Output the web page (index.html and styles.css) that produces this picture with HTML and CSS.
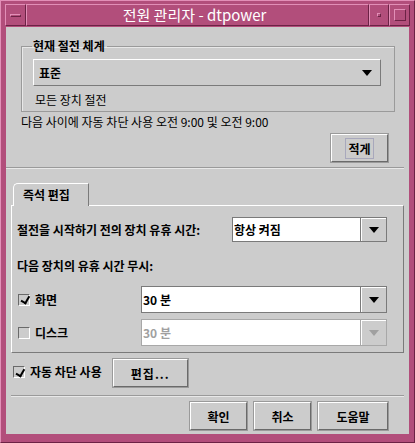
FILE: index.html
```html
<!DOCTYPE html>
<html>
<head>
  <meta charset="utf-8">
  <link rel="stylesheet" href="styles.css">
</head>
<body>
  <div class="window">
    <div class="titlebar">
      <div class="tb-button menu-button"><span class="menu-bar"></span></div>
      <div class="tb-title">전원 관리자 - dtpower</div>
      <div class="tb-button min-button"><span class="min-dot"></span></div>
      <div class="tb-button max-button"><span class="max-box"></span></div>
    </div>

    <div class="content">
      <fieldset class="group">
        <legend class="group-title">현재 절전 체계</legend>
        <div class="combo combo-raised">
          <span class="combo-text bold">표준</span>
          <span class="arrow"></span>
        </div>
        <div class="group-note">모든 장치 절전</div>
      </fieldset>

      <div class="schedule">다음 사이에 자동 차단 사용 오전 9:00 및 오전 9:00</div>

      <div class="less-row">
        <button class="button less-button"><span class="focus">적게</span></button>
      </div>

      <div class="separator"></div>

      <div class="tabs">
        <div class="tab">즉석 편집</div>
      </div>
      <div class="tab-panel">
        <div class="idle-row">
          <span class="label bold">절전을 시작하기 전의 장치 유휴 시간:</span>
          <div class="combo combo-field idle-combo">
            <span class="field-text bold">항상 켜짐</span>
            <span class="arrow-button"><span class="arrow"></span></span>
          </div>
        </div>

        <div class="label bold ignore-title">다음 장치의 유휴 시간 무시:</div>

        <div class="device-row">
          <label class="check bold"><span class="box checked"></span>화면</label>
          <div class="combo combo-field device-combo">
            <span class="field-text bold">30 분</span>
            <span class="arrow-button"><span class="arrow"></span></span>
          </div>
        </div>

        <div class="device-row">
          <label class="check bold"><span class="box"></span>디스크</label>
          <div class="combo combo-field device-combo disabled">
            <span class="field-text bold">30 분</span>
            <span class="arrow-button"><span class="arrow"></span></span>
          </div>
        </div>
      </div>

      <div class="auto-row">
        <label class="check bold"><span class="box checked"></span>자동 차단 사용</label>
        <button class="button edit-button">편집...</button>
      </div>

      <div class="separator bottom-sep"></div>

      <div class="actions">
        <button class="button action-button">확인</button>
        <button class="button action-button">취소</button>
        <button class="button action-button help-button">도움말</button>
      </div>
    </div>
  </div>
</body>
</html>
```

FILE: styles.css
```css
body {
  margin: 0;
  background: #cccccc;
  font-family: "Noto Sans CJK KR", "DejaVu Sans", sans-serif;
  font-size: 12px;
  line-height: 16px;
  color: #000;
}

.bold {
  font-weight: bold;
}

.window {
  width: 415px;
  height: 443px;
  box-sizing: border-box;
  padding: 4px 5px 8px 5px;
  background: #b24e7b;
  border-top: 1px solid #e28fb7;
  border-left: 1px solid #e28fb7;
  border-right: 1px solid #6c2245;
  border-bottom: 1px solid #6c2245;
  display: flex;
  flex-direction: column;
  overflow: hidden;
}

/* title bar */
.titlebar {
  height: 22px;
  display: flex;
  margin: -1px -1px 0 -1px;
}

.tb-button {
  box-sizing: border-box;
  height: 22px;
  display: flex;
  align-items: center;
  justify-content: center;
  border-top: 1px solid #e28fb7;
  border-left: 1px solid #e28fb7;
  border-right: 1px solid #6c2245;
  border-bottom: 1px solid #6c2245;
}

.menu-button {
  width: 21px;
}

.menu-bar {
  width: 11px;
  height: 3px;
  box-sizing: border-box;
  border-top: 1px solid #e28fb7;
  border-left: 1px solid #e28fb7;
  border-right: 1px solid #6c2245;
  border-bottom: 1px solid #6c2245;
}

.tb-title {
  flex: 1;
  box-sizing: border-box;
  height: 22px;
  line-height: 20px;
  text-align: center;
  color: #fff;
  font-size: 15px;
  border-top: 1px solid #e28fb7;
  border-left: 1px solid #e28fb7;
  border-right: 1px solid #6c2245;
  border-bottom: 1px solid #6c2245;
  padding-right: 6px;
}

.min-button {
  width: 20px;
}

.min-dot {
  width: 4px;
  height: 4px;
  box-sizing: border-box;
  border-top: 1px solid #e28fb7;
  border-left: 1px solid #e28fb7;
  border-right: 1px solid #6c2245;
  border-bottom: 1px solid #6c2245;
}

.max-button {
  width: 21px;
}

.max-box {
  width: 12px;
  height: 12px;
  box-sizing: border-box;
  border-top: 1px solid #e28fb7;
  border-left: 1px solid #e28fb7;
  border-right: 1px solid #6c2245;
  border-bottom: 1px solid #6c2245;
}

/* content area */
.content {
  flex: 1;
  margin-top: 1px;
  background: #cccccc;
  display: flex;
  flex-direction: column;
  overflow: hidden;
}

.group {
  margin: 11px 14px 0 15px;
  padding: 5px 13px 3px 11px;
  border: 1px solid #9a9a9a;
  box-shadow: inset 1px 1px 0 #e8e8e8;
}

.group-title {
  font-weight: bold;
  padding: 0 2px 0 1px;
  margin-left: -1px;
}

.combo {
  display: flex;
  align-items: center;
  box-sizing: border-box;
  height: 27px;
}

.combo-raised {
  border-top: 1px solid #fff;
  border-left: 1px solid #fff;
  border-right: 1px solid #7a7a7a;
  border-bottom: 1px solid #7a7a7a;
  padding: 0 8px 0 5px;
  justify-content: space-between;
}

.arrow {
  width: 0;
  height: 0;
  border-left: 5px solid transparent;
  border-right: 5px solid transparent;
  border-top: 6px solid #000;
}

.group-note {
  padding: 6px 0 0 2px;
}

.schedule {
  margin: 2px 0 0 15px;
}

.less-row {
  display: flex;
  justify-content: flex-end;
  padding: 4px 21px 0 0;
}

.button {
  font-family: inherit;
  font-size: 12px;
  font-weight: bold;
  color: #000;
  background: #cccccc;
  box-sizing: border-box;
  height: 28px;
  padding: 0;
  border-top: 1px solid #fff;
  border-left: 1px solid #fff;
  border-right: 1px solid #6a6a6a;
  border-bottom: 1px solid #6a6a6a;
  box-shadow: 0 0 0 1px #9a9a9a;
}

.less-button {
  width: 57px;
}

.focus {
  display: inline-block;
  padding: 1px 2px;
  border: 1px solid #a8a8bc;
}

.separator {
  height: 1px;
  background: #9a9a9a;
  border-bottom: 1px solid #e8e8e8;
  margin: 5px 5px 0 0;
}

/* tabs */
.tabs {
  display: flex;
  padding: 14px 0 0 7px;
}

.tab {
  box-sizing: border-box;
  width: 76px;
  height: 23px;
  line-height: 21px;
  padding-left: 9px;
  font-weight: bold;
  border-top: 1px solid #fff;
  border-left: 1px solid #fff;
  border-right: 1px solid #7a7a7a;
  border-top-left-radius: 5px;
  margin-bottom: -1px;
  background: #cccccc;
  position: relative;
}

.tab-panel {
  margin: 0 5px 0 5px;
  height: 148px;
  box-sizing: border-box;
  border-top: 1px solid #fff;
  border-left: 1px solid #fff;
  border-right: 1px solid #7a7a7a;
  border-bottom: 1px solid #7a7a7a;
  padding: 11px 0 0 5px;
}

.idle-row {
  display: flex;
  align-items: center;
}

.idle-row .label {
  width: 215px;
}

.combo-field {
  border: 1px solid #7a7a7a;
  background: #fff;
  height: 25px;
}

.field-text {
  flex: 1;
  padding-left: 1px;
}

.arrow-button {
  align-self: stretch;
  width: 25px;
  display: flex;
  align-items: center;
  justify-content: center;
  background: #cccccc;
  border-left: 1px solid #7a7a7a;
  box-shadow: inset 1px 1px 0 #fff;
}

.idle-combo {
  width: 155px;
}

.ignore-title {
  margin-top: 16px;
}

.device-row {
  display: flex;
  align-items: center;
  margin-top: 12px;
}

.device-row + .device-row {
  margin-top: 6px;
}

.check {
  display: flex;
  align-items: center;
  width: 124px;
}

.box {
  width: 12px;
  height: 12px;
  box-sizing: border-box;
  margin: 0 5px 0 1px;
  border-top: 1px solid #6a6a6a;
  border-left: 1px solid #6a6a6a;
  border-right: 1px solid #fff;
  border-bottom: 1px solid #fff;
  display: flex;
  align-items: center;
  justify-content: center;
}

.box.checked::after {
  content: "";
  width: 4px;
  height: 7px;
  border-right: 2px solid #000;
  border-bottom: 2px solid #000;
  transform: rotate(30deg) translate(1px, -1px);
}

.device-combo {
  width: 246px;
  height: 27px;
}

.disabled {
  color: #a0a0a0;
  border-color: #a8a8a8;
}

.disabled .arrow-button {
  border-left-color: #a8a8a8;
}

.disabled .arrow {
  border-top-color: #a0a0a0;
}

.auto-row {
  display: flex;
  align-items: center;
  padding: 6px 0 0 6px;
}

.auto-row .check {
  width: auto;
  margin-right: 11px;
  align-self: flex-start;
  margin-top: 5px;
}

.edit-button {
  width: 75px;
  letter-spacing: 1px;
}

.bottom-sep {
  margin: 8px 5px 0 5px;
}

.actions {
  display: flex;
  justify-content: flex-end;
  gap: 7px;
  padding: 5px 21px 0 0;
}

.action-button {
  width: 57px;
}

.help-button {
  width: 70px;
}
```
